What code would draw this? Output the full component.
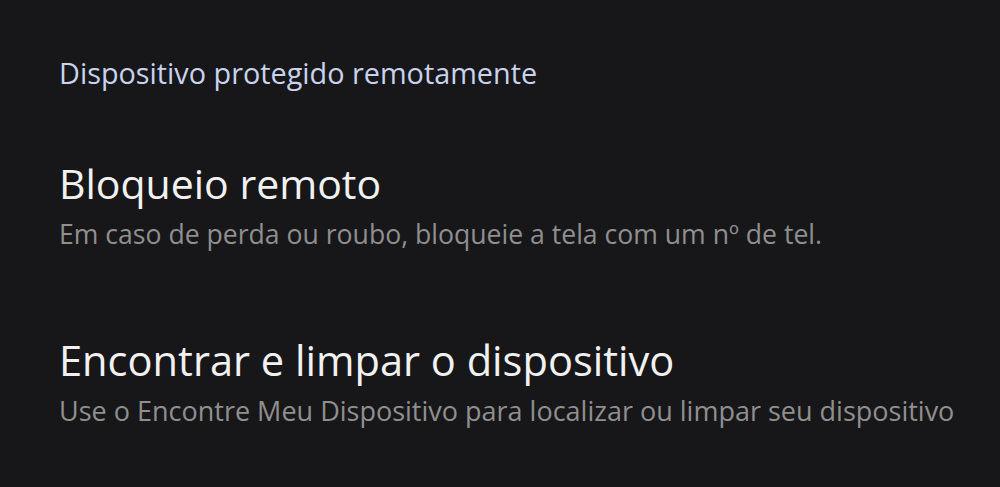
export default function App() {
  return (
    <div className="w-[1000px] h-[487px] bg-[#171719] overflow-hidden px-[59px] pt-[53px]" style={{ fontFamily: '"Open Sans", sans-serif' }}>
      <div className="text-[28.8px] leading-[40px] text-[#c9d3ee] whitespace-nowrap">Dispositivo protegido remotamente</div>
      <div className="mt-[66px]">
        <div className="text-[41px] leading-[48px] text-[#f1f1f1] whitespace-nowrap">Bloqueio remoto</div>
        <div className="mt-[9px] text-[26.6px] leading-[36px] text-[#8f8f8f] whitespace-nowrap">Em caso de perda ou roubo, bloqueie a tela com um nº de tel.</div>
      </div>
      <div className="mt-[84px]">
        <div className="text-[41.6px] leading-[48px] text-[#f1f1f1] whitespace-nowrap">Encontrar e limpar o dispositivo</div>
        <div className="mt-[9px] text-[27px] leading-[36px] text-[#8f8f8f] whitespace-nowrap">Use o Encontre Meu Dispositivo para localizar ou limpar seu dispositivo</div>
      </div>
    </div>
  );
}
